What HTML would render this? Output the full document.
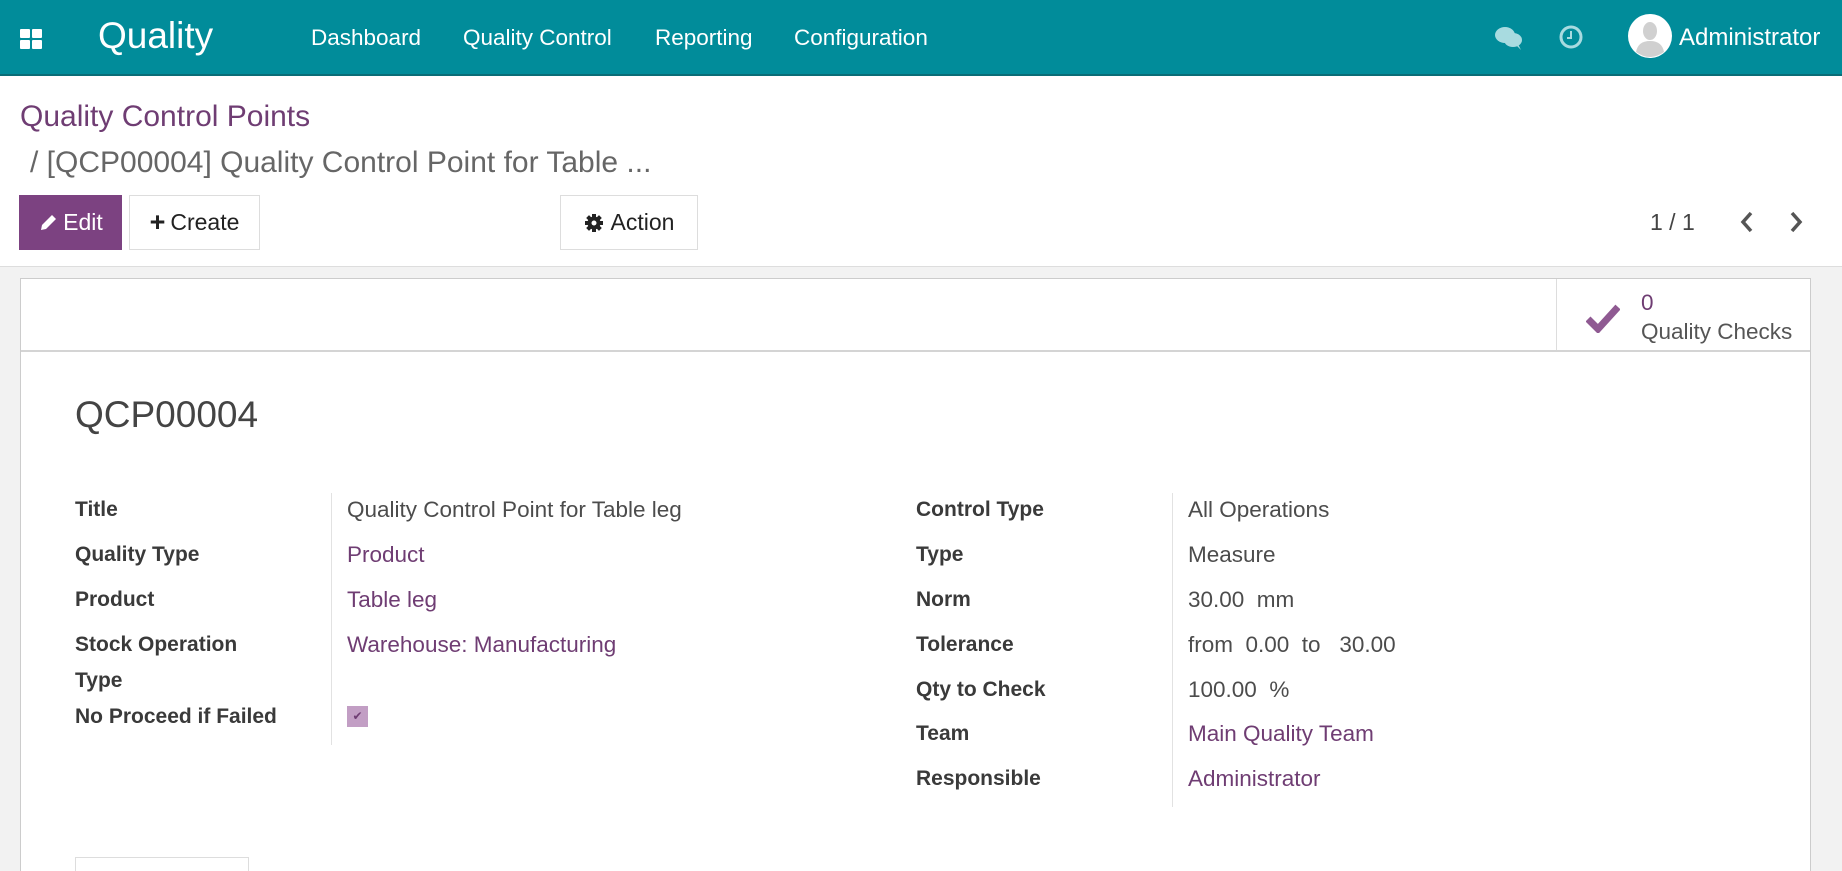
<!DOCTYPE html>
<html style="overflow:hidden;width:1842px;height:871px"><head><meta charset="utf-8"><style>
*{box-sizing:border-box;margin:0;padding:0}
body{width:1842px;height:871px;overflow:hidden;font-family:"Liberation Sans",sans-serif;background:#fff;position:relative;color:#4c4c4c}
.a{position:absolute;white-space:nowrap}
.nav{position:absolute;left:0;top:0;width:1842px;height:76px;background:#018c9a;border-bottom:2px solid #0a6d77}
.nav .a{color:#fff}
.purple{color:#6f3d73}
.btn{position:absolute;height:55px;border:1px solid #ddd;background:#fff;font-size:23px;color:#222;display:flex;align-items:center;justify-content:center}
.lbl{font-size:21px;color:#3a3a3a;font-weight:bold}
.v{font-size:22.5px;color:#4c4c4c}
.lnk{font-size:22.5px;color:#6f3d73}
</style></head><body>
<div class="nav">
 <svg class="a" style="left:20px;top:29px" width="22" height="20" viewBox="0 0 22 20"><rect x="0" y="0" width="10" height="9" rx="1" fill="#fff"/><rect x="12" y="0" width="10" height="9" rx="1" fill="#fff"/><rect x="0" y="11" width="10" height="9" rx="1" fill="#fff"/><rect x="12" y="11" width="10" height="9" rx="1" fill="#fff"/></svg>
 <div class="a" style="left:98px;top:15px;font-size:37px">Quality</div>
 <div class="a" style="left:311px;top:25px;font-size:22.5px">Dashboard</div>
 <div class="a" style="left:463px;top:25px;font-size:22.5px">Quality Control</div>
 <div class="a" style="left:655px;top:25px;font-size:22.5px">Reporting</div>
 <div class="a" style="left:794px;top:25px;font-size:22.5px">Configuration</div>
 <svg class="a" style="left:1494px;top:25px" width="30" height="26" viewBox="0 0 30 26"><ellipse cx="11" cy="10" rx="10" ry="8" fill="#a8dbe0"/><ellipse cx="19" cy="15" rx="9" ry="7" fill="#a8dbe0"/><path d="M22 20 L27 25 L24 19Z" fill="#a8dbe0"/></svg>
 <svg class="a" style="left:1558px;top:24px" width="26" height="26" viewBox="0 0 26 26"><circle cx="13" cy="13" r="10" fill="none" stroke="#a8dbe0" stroke-width="3"/><path d="M13 7v7h-4" fill="none" stroke="#a8dbe0" stroke-width="2"/></svg>
 <svg class="a" style="left:1628px;top:14px" width="44" height="44" viewBox="0 0 44 44"><circle cx="22" cy="22" r="22" fill="#fff"/><ellipse cx="22" cy="17" rx="7" ry="9" fill="#d0d0d0"/><path d="M8 38 Q10 27 22 27 Q34 27 36 38 Q22 48 8 38Z" fill="#d0d0d0"/></svg>
 <div class="a" style="left:1679px;top:24px;font-size:24px">Administrator</div>
</div>
<div class="a purple" style="left:20px;top:100px;font-size:30px">Quality Control Points</div>
<div class="a" style="left:30px;top:146px;font-size:30px;color:#666">/ [QCP00004] Quality Control Point for Table ...</div>
<div class="btn" style="left:19px;top:195px;width:103px;background:#7c4281;border-color:#7c4281;color:#fff">
 <svg width="20" height="20" viewBox="0 0 20 20" style="margin-right:5px"><path d="M3 17 L4 12 L14 2 L18 6 L8 16Z" fill="#fff"/></svg>Edit</div>
<div class="btn" style="left:129px;top:195px;width:131px"><span style="font-weight:bold;font-size:27px;margin-right:5px">+</span>Create</div>
<div class="btn" style="left:560px;top:195px;width:138px">
 <svg width="20" height="20" viewBox="0 0 20 20" style="margin-right:7px"><circle cx="10" cy="10" r="6.5" fill="#222"/><g stroke="#222" stroke-width="4"><path d="M10 1v18M1 10h18M3.6 3.6l12.8 12.8M16.4 3.6L3.6 16.4"/></g><circle cx="10" cy="10" r="2.5" fill="#fff"/></svg>Action</div>
<div class="a" style="left:1650px;top:209px;font-size:23px;color:#444">1 / 1</div>
<svg class="a" style="left:1739px;top:210px" width="16" height="24" viewBox="0 0 16 24"><path d="M12 3 L4 12 L12 21" fill="none" stroke="#555" stroke-width="3.5"/></svg>
<svg class="a" style="left:1788px;top:210px" width="16" height="24" viewBox="0 0 16 24"><path d="M4 3 L12 12 L4 21" fill="none" stroke="#555" stroke-width="3.5"/></svg>
<div class="a" style="left:0;top:266px;width:1842px;height:605px;background:#f2f2f2;border-top:1px solid #ddd"></div>
<div class="a" style="left:20px;top:278px;width:1791px;height:593px;background:#fff;border:1px solid #ccc;border-bottom:none"></div>
<div class="a" style="left:21px;top:350px;width:1789px;height:2px;background:#d4d4d4"></div>
<div class="a" style="left:1556px;top:279px;width:1px;height:71px;background:#ddd"></div>
<svg class="a" style="left:1586px;top:303px" width="34" height="30" viewBox="0 0 34 30"><path d="M2 16 L12 26 L32 4" fill="none" stroke="#8f5a92" stroke-width="7"/></svg>
<div class="a purple" style="left:1641px;top:290px;font-size:22.5px">0</div>
<div class="a" style="left:1641px;top:319px;font-size:22.5px;color:#555">Quality Checks</div>
<div class="a" style="left:75px;top:394px;font-size:37px;color:#444">QCP00004</div>
<div class="a" style="left:331px;top:493px;width:1px;height:252px;background:#e2e2e2"></div>
<div class="a" style="left:1172px;top:493px;width:1px;height:314px;background:#e2e2e2"></div>
<div class="a lbl" style="left:75px;top:498px">Title</div>
<div class="a lbl" style="left:75px;top:543px">Quality Type</div>
<div class="a lbl" style="left:75px;top:588px">Product</div>
<div class="a lbl" style="left:75px;top:633px">Stock Operation</div>
<div class="a lbl" style="left:75px;top:669px">Type</div>
<div class="a lbl" style="left:75px;top:705px">No Proceed if Failed</div>
<div class="a v" style="left:347px;top:497px">Quality Control Point for Table leg</div>
<div class="a lnk" style="left:347px;top:542px">Product</div>
<div class="a lnk" style="left:347px;top:587px">Table leg</div>
<div class="a lnk" style="left:347px;top:632px">Warehouse: Manufacturing</div>
<div class="a" style="left:347px;top:706px;width:21px;height:21px;background:#c29ec4;color:#6f3d73;font-size:12px;text-align:center;line-height:21px">✔</div>
<div class="a lbl" style="left:916px;top:498px">Control Type</div>
<div class="a lbl" style="left:916px;top:543px">Type</div>
<div class="a lbl" style="left:916px;top:588px">Norm</div>
<div class="a lbl" style="left:916px;top:633px">Tolerance</div>
<div class="a lbl" style="left:916px;top:678px">Qty to Check</div>
<div class="a lbl" style="left:916px;top:722px">Team</div>
<div class="a lbl" style="left:916px;top:767px">Responsible</div>
<div class="a v" style="left:1188px;top:497px">All Operations</div>
<div class="a v" style="left:1188px;top:542px">Measure</div>
<div class="a v" style="left:1188px;top:587px">30.00&nbsp; mm</div>
<div class="a v" style="left:1188px;top:632px">from&nbsp; 0.00&nbsp; to&nbsp;&nbsp; 30.00</div>
<div class="a v" style="left:1188px;top:677px">100.00&nbsp; %</div>
<div class="a lnk" style="left:1188px;top:721px">Main Quality Team</div>
<div class="a lnk" style="left:1188px;top:766px">Administrator</div>
<div class="a" style="left:75px;top:857px;width:174px;height:14px;border:1px solid #ddd;border-bottom:none"></div>
</body></html>
